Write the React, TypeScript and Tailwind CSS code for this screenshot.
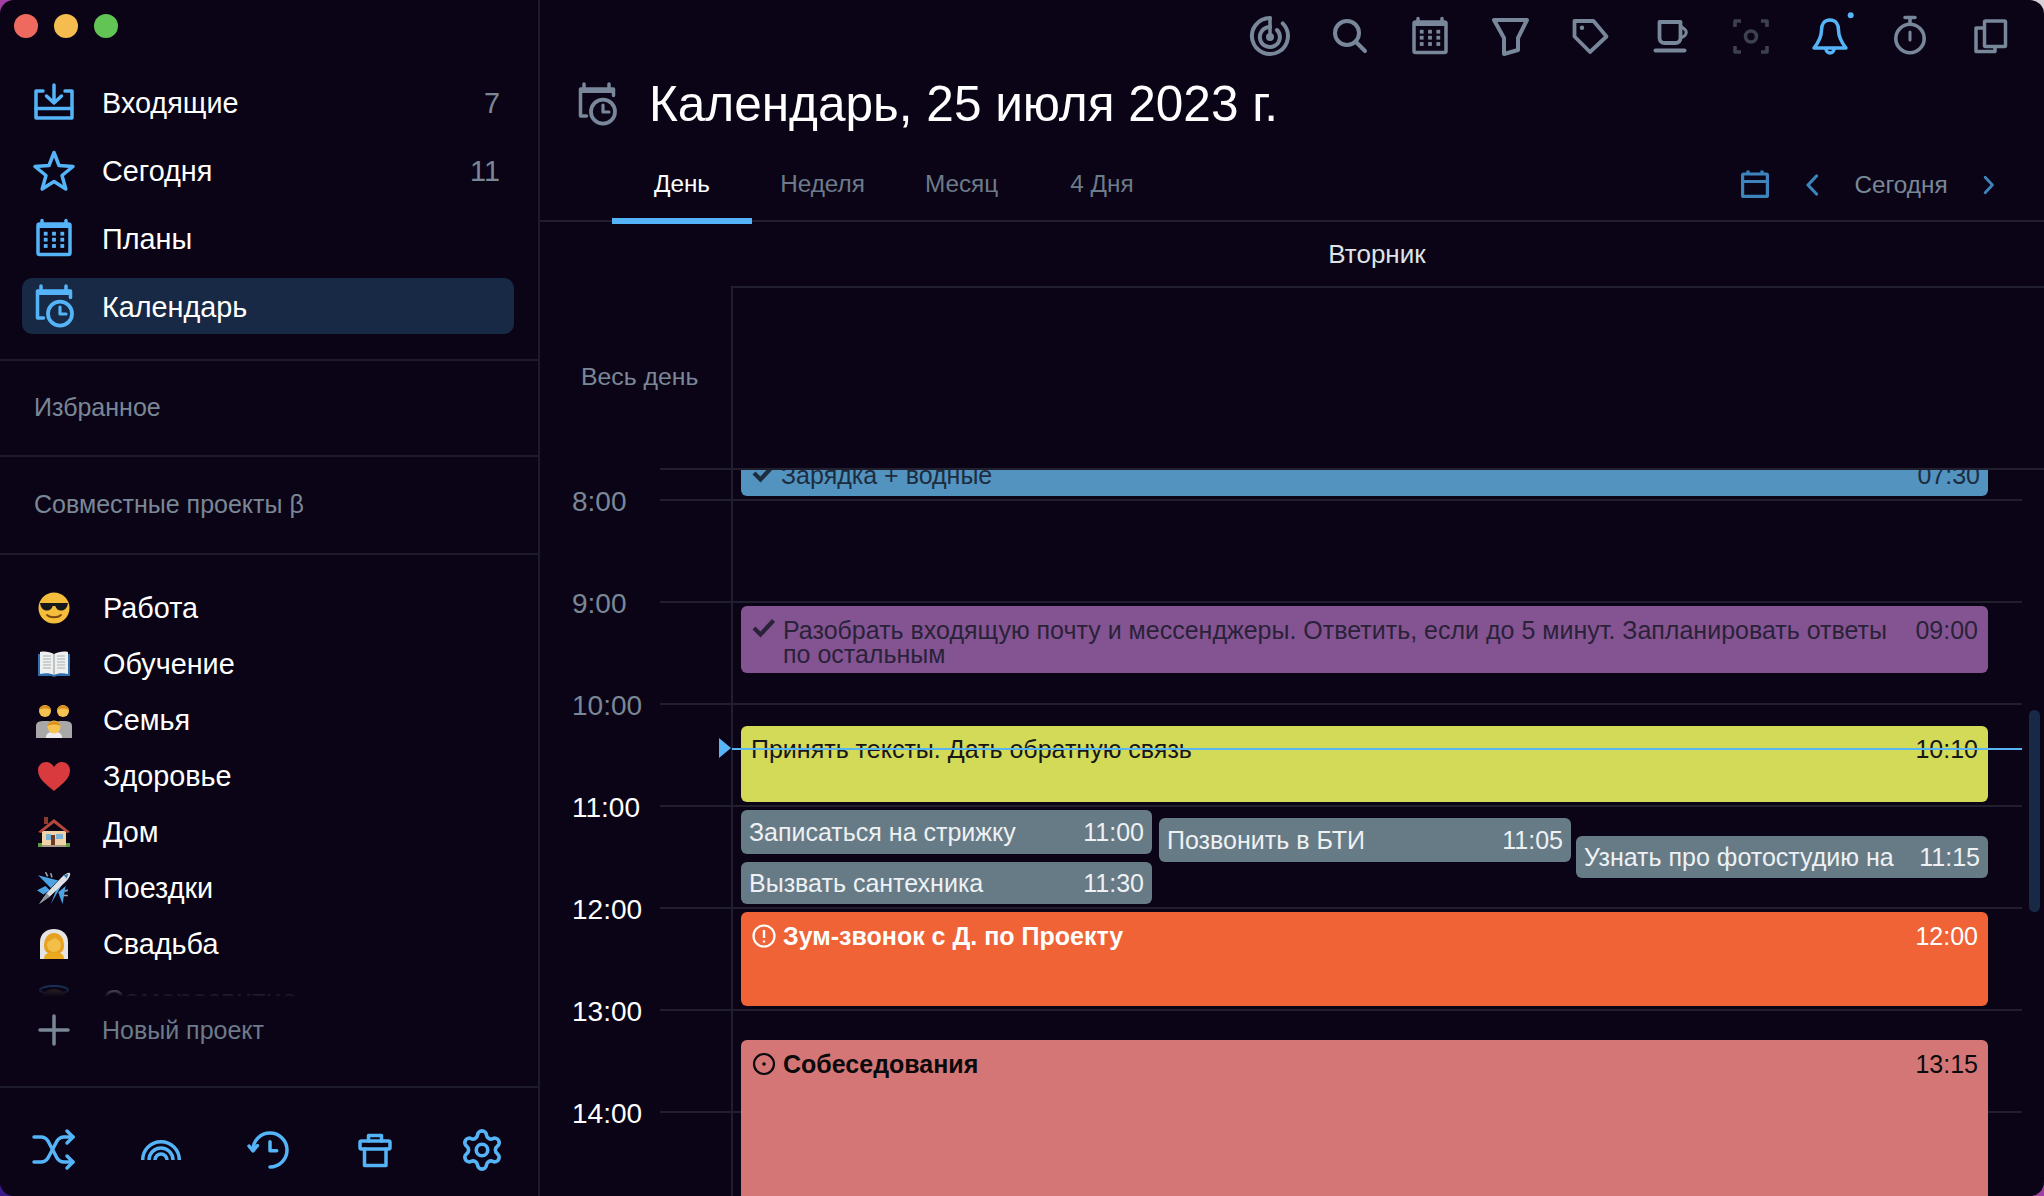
import { Settings } from 'lucide-react';
import type { ReactNode } from 'react';

const Svg = ({ children, className = 'h-12 w-12 shrink-0' }: { children: ReactNode; className?: string }) => (
  <svg
    viewBox="0 0 48 48"
    fill="none"
    stroke="currentColor"
    strokeWidth="3.5"
    strokeLinecap="round"
    strokeLinejoin="round"
    className={className}
  >
    {children}
  </svg>
);

const CalendarGrid = () => (
  <Svg>
    <rect x="8" y="10" width="32" height="30.5" rx="1.5" />
    <path d="M8 11.5H40" strokeWidth="5" strokeLinecap="butt" />
    <path d="M12 6.5V9M36 6.5V9" />
    <g fill="currentColor" stroke="none">
      {[15.7, 24, 32.3].flatMap((x) =>
        [19.7, 25.7, 32].map((y) => <rect key={`${x}-${y}`} x={x - 1.9} y={y - 1.9} width="3.8" height="3.8" />),
      )}
    </g>
  </Svg>
);

const CalendarClock = () => (
  <Svg>
    <path d="M13.5 36H7.5V9H40.5V15.5" />
    <path d="M7.5 10.5H40.5" strokeWidth="5" strokeLinecap="butt" />
    <path d="M11 4V8M36 4V8" />
    <circle cx="30" cy="31.7" r="12" strokeWidth="3.8" />
    <path d="M30 25V32H36" strokeWidth="3.2" />
  </Svg>
);

const InboxIcon = () => (
  <Svg>
    <path d="M13 13H6V40H42V13H35" />
    <path d="M6 30.5H42M24 7V25M16.5 18L24 25L31.5 18" />
  </Svg>
);

const StarIcon = () => (
  <Svg>
    <path d="M24 6.5L29 19.5L43 20.5L32 29.5L35.8 43L24 35.5L12.2 43L16 29.5L5 20.5L19 19.5Z" />
  </Svg>
);

const RadarIcon = () => (
  <Svg>
    <path d="M24 6A18 18 0 1 0 36.7 11.3" strokeWidth="4" />
    <path d="M24 15A10 10 0 1 0 31 18" strokeWidth="4" />
    <path d="M24 6V24" strokeWidth="3.5" />
    <circle cx="24" cy="25" r="4" fill="currentColor" stroke="none" />
  </Svg>
);

const SearchIcon = () => (
  <Svg>
    <circle cx="21" cy="21" r="12" strokeWidth="4" />
    <path d="M30 30L39 39" strokeWidth="4" />
  </Svg>
);

const FunnelIcon = () => (
  <Svg>
    <path d="M8 8H41L32 26V38L18 42V26Z" strokeWidth="4" />
  </Svg>
);

const TagIcon = () => (
  <Svg>
    <path d="M8.5 9H27.5L40.5 24.5L24 40L8.5 24.5Z" strokeWidth="3.8" />
    <circle cx="16" cy="15.7" r="2.2" fill="currentColor" stroke="none" />
  </Svg>
);

const CoffeeIcon = () => (
  <Svg>
    <path d="M13.5 10H34.5V26A5 5 0 0 1 29.5 31H18.5A5 5 0 0 1 13.5 26Z" strokeWidth="3.8" />
    <path d="M35 14.5L39 17.5Q41.5 20 39 23.5L35 26" strokeWidth="3" />
    <path d="M9.5 38.5H38.5" strokeWidth="4" />
  </Svg>
);

const FocusIcon = () => (
  <Svg>
    <path d="M15 9H9V15M35 9H41V15M15 40H9V34M35 40H41V34" strokeWidth="3.6" strokeLinecap="butt" />
    <circle cx="25" cy="24.5" r="5.5" strokeWidth="3.6" />
  </Svg>
);

const BellIcon = () => (
  <Svg>
    <path d="M24 8C18 8 15.5 12.5 15.5 18C15.5 25 12 31 8 36H40C36 31 32.5 25 32.5 18C32.5 12.5 30 8 24 8Z" />
    <path d="M20 37A4 4 0 0 0 28 37" />
    <circle cx="44.7" cy="3.2" r="3" fill="currentColor" stroke="none" />
  </Svg>
);

const StopwatchIcon = () => (
  <Svg>
    <circle cx="24" cy="26.5" r="14.2" strokeWidth="3.6" />
    <path d="M19 5.5H29M24 6V11" strokeWidth="3.6" />
    <path d="M24 20V28" strokeWidth="3" />
  </Svg>
);

const CopyIcon = () => (
  <Svg>
    <rect x="18.5" y="9" width="21" height="25.5" rx="1" />
    <path d="M18 16H10V39.5H29V35" />
  </Svg>
);

const ShuffleIcon = () => (
  <Svg>
    <path d="M4 11H11C14 11 16 12 18 15L27 32C29 35 31 36 34 36H43" />
    <path d="M4 36H11C14 36 16 35 18 32L27 15C29 12 31 11 34 11H43" />
    <path d="M37 5L43 11L37 17M37 30L43 36L37 42" />
  </Svg>
);

const RainbowIcon = () => (
  <Svg>
    <g strokeLinecap="butt">
      <path d="M5.7 34A18.3 18.3 0 0 1 42.3 34" />
      <path d="M12 34A12 12 0 0 1 36 34" />
      <path d="M18 34A6 6 0 0 1 30 34" />
    </g>
  </Svg>
);

const HistoryIcon = () => (
  <Svg>
    <path d="M9 24A17 17 0 1 1 26 41" />
    <path d="M5 20L9 25L13.5 19.5" />
    <path d="M26 15.7V24.7H32.7" />
  </Svg>
);

const BoxIcon = () => (
  <Svg>
    <rect x="9" y="15" width="30" height="8" rx="1.5" />
    <path d="M13.5 23V39.5H35V23M17.5 15V9.5H30.5V15" />
  </Svg>
);

const PlusIcon = () => (
  <Svg>
    <path d="M10 24H38M24 10V38" />
  </Svg>
);

const CheckIcon = () => (
  <svg viewBox="0 0 24 20" fill="none" stroke="currentColor" strokeWidth="4.2" className="h-[20px] w-[24px] shrink-0">
    <path d="M2 10L8.5 16.5L21.5 2.5" />
  </svg>
);

const AlertCircle = () => (
  <svg viewBox="0 0 24 24" fill="none" stroke="currentColor" strokeWidth="2.2" className="h-[24px] w-[24px] shrink-0">
    <circle cx="12" cy="12" r="10.5" />
    <path d="M12 6V14M12 16.5V18.5" strokeWidth="2.4" />
  </svg>
);

const DotCircle = () => (
  <svg viewBox="0 0 24 24" fill="none" stroke="currentColor" strokeWidth="2.2" className="h-[24px] w-[24px] shrink-0">
    <circle cx="12" cy="12" r="10" />
    <circle cx="12" cy="12" r="1.8" fill="currentColor" stroke="none" />
  </svg>
);

// the screenshot's emoji, drawn since no colour emoji font is installed
const EmojiCool = () => (
  <svg viewBox="0 0 32 32" className="h-8 w-8">
    <circle cx="16" cy="16" r="15.5" fill="#f5bd3c" />
    <path d="M2 11H30L29.500 13C28.500 17 26 18.500 23 18.500C20 18.500 18 16.500 17.300 14H14.700C14 16.500 12 18.500 9 18.500C6 18.500 3.500 17 2.500 13Z" fill="#17181c" />
    <path d="M9 23C12 26 20 26 23 23" fill="none" stroke="#7a4a12" strokeWidth="1.800" strokeLinecap="round" />
  </svg>
);

const EmojiBook = () => (
  <svg viewBox="0 0 32 32" className="h-8 w-8">
    <path d="M0 6H32V28H19L16 29L13 28H0Z" fill="#2f6fae" />
    <path d="M2 4C7 3 12 4 16 6C20 4 25 3 30 4V26C25 25 20 25 16 27C12 25 7 25 2 26Z" fill="#eef0f0" />
    <path d="M16 6V27" stroke="#8f9396" strokeWidth="1" />
    <path d="M5 8H13M5 11H13M5 14H13M5 17H13M5 20H13M19 8H27M19 11H27M19 14H27M19 17H27M19 20H27" stroke="#a9adb0" strokeWidth="1.200" />
  </svg>
);

const EmojiFamily = () => (
  <svg viewBox="0 0 36 36" className="h-9 w-9">
    <path d="M0 36V24C0 20 3 19 9 19C13 19 18 19 18 22C18 19 23 19 27 19C33 19 36 20 36 24V36Z" fill="#a8a8a8" />
    <circle cx="9" cy="9" r="6" fill="#f6c350" />
    <path d="M3 8C3.500 2 14.500 2 15 8C12 6 6 6 3 8Z" fill="#d98f1f" />
    <circle cx="27" cy="9" r="6" fill="#f6c350" />
    <path d="M21 8C21.500 2 32.500 2 33 8C30 6 24 6 21 8Z" fill="#d98f1f" />
    <path d="M10 36C10 31 13 30 18 30C23 30 26 31 26 36Z" fill="#ededed" />
    <circle cx="18" cy="25" r="6.500" fill="#f6c350" />
    <path d="M11.500 24C12 18 24 18 24.500 24C21 22 15 22 11.500 24Z" fill="#d98f1f" />
  </svg>
);

const EmojiHeart = () => (
  <svg viewBox="0 0 32 32" className="h-8 w-8">
    <path d="M16 31C9 25 0 19 0 10.500C0 5 4 2 8 2C11 2 14 3.500 16 7C18 3.500 21 2 24 2C28 2 32 5 32 10.500C32 19 23 25 16 31Z" fill="#d93a3d" />
  </svg>
);

const EmojiHouse = () => (
  <svg viewBox="0 0 32 32" className="h-8 w-8">
    <path d="M6 1H10V8H6Z" fill="#8a3b2c" />
    <path d="M4 15H28V30H4Z" fill="#f0d3a8" />
    <path d="M0 16L16 3L32 16L29 17L16 7L3 17Z" fill="#b5483a" />
    <path d="M8 18H13V24H8Z" fill="#7fb3d6" />
    <path d="M18 18H25V23H18Z" fill="#7fb3d6" />
    <path d="M13 19H17V30H13Z" fill="#6e3b26" />
    <path d="M0 27H4V31H0ZM28 27H32V31H28Z" fill="#5d9c3c" />
    <path d="M4 29H28V31H4Z" fill="#a79b86" />
  </svg>
);

const EmojiPlane = () => (
  <svg viewBox="0 0 32 32" className="h-[34px] w-[34px]">
    <path d="M1 4L20 9L13 16Z" fill="#4ba3e3" />
    <path d="M13 31L24 12L18 18Z" fill="#4ba3e3" />
    <path d="M24 31L27 14L20 20Z" fill="#4ba3e3" />
    <path d="M0 18L8 14L12 18L6 22Z" fill="#4ba3e3" />
    <path d="M8 1L10 5M13 2L14 6M29 18L26 19M29 23L25 23" stroke="#9aa2a8" strokeWidth="1.500" />
    <path d="M2 31L9 21L23 6C26 3 30 1 31 2C32 3 30 7 27 10L12 24Z" fill="#dde1e4" />
    <path d="M2 31L9 21L12 24Z" fill="#8a949b" />
    <path d="M25 4L29.500 2.500L28 7Z" fill="#3a78ad" />
  </svg>
);

const EmojiBride = () => (
  <svg viewBox="0 0 32 32" className="h-8 w-8">
    <path d="M2 31V14C2 5 9 1 16 1C23 1 30 5 30 14V31Z" fill="#e4e4e2" />
    <path d="M6 31C6 26 10 24 16 24C22 24 26 26 26 31Z" fill="#eba91f" />
    <path d="M6 18C6 9 11 5 16 5C22 5 26 10 26 18C26 22 24 24 22 25H10C8 24 6 22 6 18Z" fill="#e6a11f" />
    <circle cx="16" cy="17" r="7" fill="#f4bf49" />
    <path d="M9 14C12 13 15 11 17 9C19 11 21 13 23 14L22 9H10Z" fill="#e6a11f" />
  </svg>
);

const EmojiHalo = () => (
  <svg viewBox="0 0 32 32" className="h-8 w-8">
    <ellipse cx="16" cy="6" rx="14" ry="4" fill="none" stroke="#2f6fae" strokeWidth="2" />
    <circle cx="16" cy="19" r="14" fill="#6e5a3c" />
  </svg>
);

const navItems = [
  { label: 'Входящие', count: '7', icon: <InboxIcon /> },
  { label: 'Сегодня', count: '11', icon: <StarIcon /> },
  { label: 'Планы', icon: <CalendarGrid /> },
  { label: 'Календарь', active: true, icon: <CalendarClock /> },
];

const projects = [
  { label: 'Работа', icon: <EmojiCool /> },
  { label: 'Обучение', icon: <EmojiBook /> },
  { label: 'Семья', icon: <EmojiFamily /> },
  { label: 'Здоровье', icon: <EmojiHeart /> },
  { label: 'Дом', icon: <EmojiHouse /> },
  { label: 'Поездки', icon: <EmojiPlane /> },
  { label: 'Свадьба', icon: <EmojiBride /> },
  { label: 'Саморазвитие', icon: <EmojiHalo /> },
];

const Sidebar = () => (
  <aside className="flex h-full w-[540px] shrink-0 flex-col border-r-2 border-[#1d1b29]">
    <div className="flex gap-[16px] pl-[14px] pt-[14px]">
      <span className="h-6 w-6 rounded-full bg-[#ee6a5f]" />
      <span className="h-6 w-6 rounded-full bg-[#f5bd4f]" />
      <span className="h-6 w-6 rounded-full bg-[#61c454]" />
    </div>

    <nav className="ml-[22px] mr-[24px] mt-[36px] flex flex-col gap-[12px]">
      {navItems.map((item) => (
        <div
          key={item.label}
          className={`flex h-[56px] items-center gap-[24px] rounded-[10px] pl-[8px] pr-[14px] text-[#55b4f8] ${
            item.active ? 'bg-[#182945]' : ''
          }`}
        >
          {item.icon}
          <span className="pt-[2px] text-[28.8px] leading-[32px] text-white">{item.label}</span>
          {item.count && (
            <span className="ml-auto pt-[2px] text-[28.8px] leading-[32px] text-[#7a8796]">{item.count}</span>
          )}
        </div>
      ))}
    </nav>

    <div className="mt-[25px] flex h-[98px] items-center border-y-2 border-[#1d1b29] pl-[34px] text-[25px] text-[#7a8796]">
      Избранное
    </div>
    <div className="flex h-[98px] items-center border-b-2 border-[#1d1b29] pl-[34px] text-[25px] text-[#7a8796]">
      Совместные проекты β
    </div>

    <div className="relative flex h-[442px] flex-col overflow-hidden pt-[25px]">
      {projects.map((project) => (
        <div key={project.label} className="flex h-[56px] shrink-0 items-center">
          <span className="flex w-[108px] justify-center">{project.icon}</span>
          <span className="-ml-[5px] text-[28.8px] leading-[32px] text-white">{project.label}</span>
        </div>
      ))}
      <div className="absolute inset-x-0 bottom-0 h-[16px] bg-gradient-to-b from-[#0a0416]/40 to-[#0a0416]" />
    </div>

    <div className="flex h-[91px] items-start border-b-2 border-[#1d1b29] pl-[30px] pt-[9px] text-[#7a8796]">
      <PlusIcon />
      <span className="ml-[24px] flex h-12 items-center text-[25px] leading-[28px] text-[#6d7a8a]">Новый проект</span>
    </div>

    <div className="flex flex-1 items-center pt-[16px] text-[#55b4f8]">
      <div className="flex w-[107px] justify-center">
        <ShuffleIcon />
      </div>
      <div className="flex w-[107px] justify-center">
        <RainbowIcon />
      </div>
      <div className="flex w-[107px] justify-center">
        <HistoryIcon />
      </div>
      <div className="flex w-[107px] justify-center">
        <BoxIcon />
      </div>
      <div className="flex w-[107px] justify-center">
        <Settings size={46} strokeWidth={1.9} />
      </div>
    </div>
  </aside>
);

const toolbar = [
  { key: 'radar', icon: <RadarIcon />, tone: 'text-[#788799]' },
  { key: 'search', icon: <SearchIcon />, tone: 'text-[#788799]' },
  { key: 'plans', icon: <CalendarGrid />, tone: 'text-[#788799]' },
  { key: 'filter', icon: <FunnelIcon />, tone: 'text-[#788799]' },
  { key: 'tag', icon: <TagIcon />, tone: 'text-[#788799]' },
  { key: 'coffee', icon: <CoffeeIcon />, tone: 'text-[#788799]' },
  { key: 'focus', icon: <FocusIcon />, tone: 'text-[#3d404f]' },
  { key: 'bell', icon: <BellIcon />, tone: 'text-[#55b4f8]' },
  { key: 'timer', icon: <StopwatchIcon />, tone: 'text-[#788799]' },
  { key: 'copy', icon: <CopyIcon />, tone: 'text-[#788799]' },
];

const hours = [
  { label: '8:00', tone: 'text-[#7a8796]' },
  { label: '9:00', tone: 'text-[#7a8796]' },
  { label: '10:00', tone: 'text-[#7a8796]' },
  { label: '11:00', tone: 'text-white' },
  { label: '12:00', tone: 'text-white' },
  { label: '13:00', tone: 'text-white' },
  { label: '14:00', tone: 'text-white' },
];

const Timeline = () => (
  <div className="relative min-h-0 flex-1 overflow-hidden">
    <div className="-mt-[21px] flex flex-col">
      {hours.map((hour) => (
        <div key={hour.label} className="flex h-[102px] shrink-0 items-center pr-[22px]">
          <span className={`w-[120px] pl-[32px] pt-[3px] text-[28px] leading-[32px] ${hour.tone}`}>{hour.label}</span>
          <span className="h-[2px] flex-1 bg-[#211f2d]" />
        </div>
      ))}
    </div>
    <div className="absolute bottom-0 left-[191px] top-0 w-[2px] bg-[#211f2d]" />

    <div className="absolute -top-[19px] left-[201px] flex h-[45px] w-[1247px] justify-between rounded-[6px] bg-[#5293bf] pl-[11px] pr-[8px] pt-[12px] text-[25px] leading-[24px] text-[#1d2c3e]">
      <span className="flex gap-[5px]">
        <CheckIcon />
        <span>Зарядка + водные</span>
      </span>
      <span>07:30</span>
    </div>

    <div className="absolute left-[201px] top-[136px] flex h-[67px] w-[1247px] justify-between rounded-[6px] bg-[#845492] pl-[11px] pr-[10px] pt-[12px] text-[25px] leading-[24px] text-[#2a2238]">
      <span className="flex w-[1157px] gap-[7px]">
        <CheckIcon />
        <span>Разобрать входящую почту и мессенджеры. Ответить, если до 5 минут. Запланировать ответы по остальным</span>
      </span>
      <span>09:00</span>
    </div>

    <div className="absolute left-[201px] top-[256px] flex h-[76px] w-[1247px] justify-between rounded-[6px] bg-[#d2da58] pl-[10px] pr-[10px] pt-[11px] text-[25px] leading-[24px] text-[#17171a]">
      <span>Принять тексты. Дать обратную связь</span>
      <span>10:10</span>
    </div>

    <div className="absolute left-[201px] top-[340px] flex h-[44px] w-[411px] justify-between rounded-[6px] bg-[#677b87] pl-[8px] pr-[8px] pt-[10px] text-[25px] leading-[24px] text-[#eef1f3]">
      <span>Записаться на стрижку</span>
      <span>11:00</span>
    </div>
    <div className="absolute left-[201px] top-[392px] flex h-[42px] w-[411px] justify-between rounded-[6px] bg-[#677b87] pl-[8px] pr-[8px] pt-[9px] text-[25px] leading-[24px] text-[#eef1f3]">
      <span>Вызвать сантехника</span>
      <span>11:30</span>
    </div>
    <div className="absolute left-[619px] top-[348px] flex h-[44px] w-[412px] justify-between rounded-[6px] bg-[#677b87] pl-[8px] pr-[8px] pt-[10px] text-[25px] leading-[24px] text-[#eef1f3]">
      <span>Позвонить в БТИ</span>
      <span>11:05</span>
    </div>
    <div className="absolute left-[1036px] top-[366px] flex h-[42px] w-[412px] justify-between rounded-[6px] bg-[#677b87] pl-[8px] pr-[8px] pt-[9px] text-[25px] leading-[24px] text-[#eef1f3]">
      <span>Узнать про фотостудию на</span>
      <span>11:15</span>
    </div>

    <div className="absolute left-[201px] top-[442px] flex h-[94px] w-[1247px] justify-between rounded-[6px] bg-[#ef6337] pl-[11px] pr-[10px] pt-[12px] text-[25px] leading-[24px] text-white">
      <span className="flex gap-[7px] font-bold">
        <AlertCircle />
        <span>Зум-звонок с Д. по Проекту</span>
      </span>
      <span>12:00</span>
    </div>
    <div className="absolute left-[201px] top-[570px] flex h-[200px] w-[1247px] justify-between rounded-[6px] bg-[#d57676] pl-[11px] pr-[10px] pt-[12px] text-[25px] leading-[24px] text-[#0a0a0c]">
      <span className="flex gap-[7px] font-bold">
        <DotCircle />
        <span>Собеседования</span>
      </span>
      <span>13:15</span>
    </div>

    <div className="absolute left-[192px] right-[22px] top-[278px] h-[2px] bg-[#5ab5f5]" />
    <svg viewBox="0 0 12 20" className="absolute left-[179px] top-[268px] h-[20px] w-[12px] text-[#5ab5f5]">
      <path d="M0 0L12 10L0 20Z" fill="currentColor" />
    </svg>
    <div className="absolute right-[4px] top-[240px] h-[202px] w-[11px] rounded-full bg-[#182945]" />
  </div>
);

const Main = () => (
  <main className="flex h-full min-w-0 flex-1 flex-col">
    <div className="flex h-[72px] shrink-0 items-center justify-end pr-[14px]">
      {toolbar.map((item) => (
        <div key={item.key} className={`flex w-[80px] justify-center ${item.tone}`}>
          {item.icon}
        </div>
      ))}
    </div>

    <div className="flex h-[64px] shrink-0 items-center pl-[33px] text-[#788799]">
      <CalendarClock />
      <h1 className="ml-[28px] text-[49.500px] font-normal leading-[56px] text-white">Календарь, 25 июля 2023 г.</h1>
    </div>

    <div className="relative flex h-[86px] shrink-0 items-start border-b-2 border-[#211f2d] pl-[72px] pt-[36px] text-[24.300px] leading-[24px] text-[#6d7a8a]">
      <span className="relative w-[140px] text-center text-white">
        День
        <span className="absolute left-0 right-0 top-[46px] h-[6px] bg-[#55b4f8]" />
      </span>
      <span className="w-[141px] text-center">Неделя</span>
      <span className="w-[137px] text-center">Месяц</span>
      <span className="w-[144px] text-center">4 Дня</span>
      <div className="ml-auto flex items-center pr-[49px]">
        <svg viewBox="0 0 28 28" fill="none" stroke="#3d84bd" strokeWidth="3.2" className="-mt-[2px] h-[28px] w-[28px]">
          <rect x="1.600" y="4" width="24.800" height="22.400" rx="1" />
          <path d="M1.600 11.500H26.400M7 0.500V4M21 0.500V4" />
        </svg>
        <svg viewBox="0 0 14 22" fill="none" stroke="#3d84bd" strokeWidth="3.2" strokeLinecap="round" strokeLinejoin="round" className="ml-[36px] h-[22px] w-[14px]">
          <path d="M11.500 2L3 11L11.500 20" />
        </svg>
        <span className="ml-[35px] w-[94px] whitespace-nowrap text-center text-[#7a8796]">Сегодня</span>
        <svg viewBox="0 0 14 22" fill="none" stroke="#3d84bd" strokeWidth="3.2" strokeLinecap="round" strokeLinejoin="round" className="ml-[35px] h-[22px] w-[12px]">
          <path d="M2.500 2L11 11L2.500 20" />
        </svg>
      </div>
    </div>

    <div className="ml-[192px] mr-[22px] flex h-[64px] shrink-0 items-center justify-center text-[26px] text-[#dfe3e7]">
      Вторник
    </div>

    <div className="flex h-[182px] shrink-0">
      <div className="flex w-[191px] items-center pl-[41px] text-[24.800px] text-[#7a8796]">Весь день</div>
      <div className="flex-1 border-l-2 border-t-2 border-[#211f2d]" />
    </div>
    <div className="ml-[120px] h-[2px] shrink-0 bg-[#211f2d]" />

    <Timeline />
  </main>
);

export default function App() {
  return (
    <div className="h-[1196px] w-[2044px] overflow-hidden bg-gradient-to-tr from-[#3a1a8a] via-[#a040a0] to-[#d8d0d8] font-['Liberation_Sans',Arial,sans-serif]">
      <div className="flex h-full w-full overflow-hidden rounded-[14px] bg-[#0a0416]">
        <Sidebar />
        <Main />
      </div>
    </div>
  );
}
